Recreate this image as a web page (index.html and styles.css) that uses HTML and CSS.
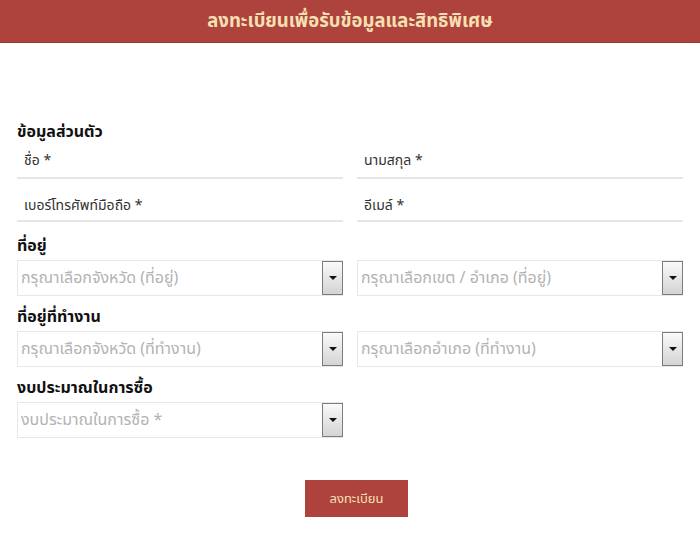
FILE: index.html
```html
<!DOCTYPE html>
<html lang="th">
<head>
<meta charset="utf-8">
<link rel="stylesheet" href="styles.css">
</head>
<body>
<header class="banner">ลงทะเบียนเพื่อรับข้อมูลและสิทธิพิเศษ</header>
<main class="form">
  <h2 class="section-title first">ข้อมูลส่วนตัว</h2>
  <div class="grid">
    <div class="text-field top">ชื่อ *</div>
    <div class="text-field top">นามสกุล *</div>
    <div class="text-field">เบอร์โทรศัพท์มือถือ *</div>
    <div class="text-field">อีเมล์ *</div>
  </div>
  <h2 class="section-title after-text">ที่อยู่</h2>
  <div class="grid">
    <div class="select"><span class="ph">กรุณาเลือกจังหวัด (ที่อยู่)</span><span class="arrow"></span></div>
    <div class="select"><span class="ph">กรุณาเลือกเขต / อำเภอ (ที่อยู่)</span><span class="arrow"></span></div>
  </div>
  <h2 class="section-title">ที่อยู่ที่ทำงาน</h2>
  <div class="grid">
    <div class="select"><span class="ph">กรุณาเลือกจังหวัด (ที่ทำงาน)</span><span class="arrow"></span></div>
    <div class="select"><span class="ph">กรุณาเลือกอำเภอ (ที่ทำงาน)</span><span class="arrow"></span></div>
  </div>
  <h2 class="section-title">งบประมาณในการซื้อ</h2>
  <div class="grid">
    <div class="select"><span class="ph">งบประมาณในการซื้อ *</span><span class="arrow"></span></div>
  </div>
  <div class="actions"><button class="submit">ลงทะเบียน</button></div>
</main>
</body>
</html>
```
FILE: styles.css
```css
* { box-sizing: border-box; }
body {
  margin: 0;
  font-family: "Noto Sans", "Noto Sans Thai", sans-serif;
  color: #222;
  background: #fff;
}
.banner {
  height: 43px;
  background: #ae423c;
  color: #f6e0b3;
  font-weight: 700;
  font-size: 18.5px;
  display: flex;
  align-items: center;
  justify-content: center;
  border-bottom: 1px solid #9c3732;
}
.form {
  padding: 0 17px;
}
.section-title {
  margin: 0;
  font-size: 16px;
  font-weight: 700;
  color: #111;
  height: 22px;
  line-height: 22px;
}
.section-title.first {
  margin-top: 80px;
  height: 16px;
  line-height: 16px;
}
.section-title.after-text { margin-top: 12px; }
.grid {
  display: grid;
  grid-template-columns: 326px 326px;
  column-gap: 14px;
}
.text-field {
  height: 43px;
  padding: 17px 0 0 7px;
  font-size: 14px;
  color: #333;
  border-bottom: 2px solid #e6e6e6;
  line-height: 18px;
}
.text-field.top {
  height: 40px;
  padding-top: 12px;
}
.select {
  height: 36px;
  border: 1px solid #e8e8e8;
  display: flex;
  align-items: center;
  justify-content: space-between;
  padding-left: 3px;
  margin: 4px 0 9px;
}
.ph {
  font-size: 16px;
  color: #b3b3b3;
}
.arrow {
  width: 21px;
  height: 34px;
  margin-right: -1px;
  border: 1px solid #7c7c7c;
  background: linear-gradient(#fafafa, #d4d4d4);
  display: flex;
  align-items: center;
  justify-content: center;
}
.arrow::after {
  content: "";
  border-left: 4px solid transparent;
  border-right: 4px solid transparent;
  border-top: 4px solid #111;
}
.actions {
  display: flex;
  justify-content: center;
  margin-top: 33px;
}
.submit {
  width: 103px;
  height: 37px;
  background: #ae423c;
  color: #f6e0b3;
  border: none;
  font-family: inherit;
  font-size: 13px;
  margin-left: 13px;
}
```
